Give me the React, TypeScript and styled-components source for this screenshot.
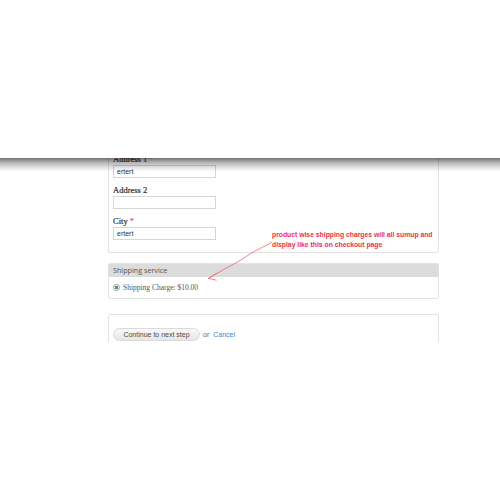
import React from "react";
import styled, { createGlobalStyle } from "styled-components";

const GlobalStyle = createGlobalStyle`
  html, body { margin: 0; padding: 0; background: #fff; }
  body { font-family: "Liberation Sans", Arial, sans-serif; }
`;

const Page = styled.div`
  width: 500px;
  height: 500px;
  display: flex;
  flex-direction: column;
  background: #fff;
`;

const TopSpace = styled.div`
  height: 158px;
  flex: none;
`;

const Viewport = styled.div`
  position: relative;
  height: 184px;
  flex: none;
  overflow: hidden;
`;

const EdgeShadow = styled.div`
  position: absolute;
  left: 0;
  right: 0;
  top: 0;
  height: 14px;
  background: linear-gradient(
    rgba(0, 0, 0, 0.55),
    rgba(0, 0, 0, 0.28) 35%,
    rgba(0, 0, 0, 0.08) 75%,
    rgba(0, 0, 0, 0)
  );
  pointer-events: none;
  z-index: 3;
`;

const Column = styled.div`
  display: flex;
  flex-direction: column;
  padding: 0 61px 0 108px;
`;

const Panel = styled.section<{ $clipTop?: boolean; $gap?: number }>`
  border: 1px solid #e2e2e2;
  border-radius: 2px;
  margin-top: ${(p) => (p.$clipTop ? -20 : p.$gap ?? 0)}px;
  background: #fff;
`;

const FieldsBody = styled.div`
  display: flex;
  flex-direction: column;
  gap: 7px;
  padding: 15px 4px 12px;
`;

const Field = styled.div`
  display: flex;
  flex-direction: column;
  gap: 1px;
`;

const Label = styled.label`
  font-family: "Liberation Serif", Georgia, serif;
  font-weight: normal;
  font-size: 8.5px;
  line-height: 10px;
  height: 10px;
  color: #2e2e2e;
  -webkit-text-stroke: 0.2px #2e2e2e;
`;

const Req = styled.span`
  color: #e0303a;
  -webkit-text-stroke: 0;
  margin-left: 2px;
`;

const TextInput = styled.div`
  box-sizing: border-box;
  width: 103px;
  height: 13px;
  border: 1px solid #d6d6d6;
  padding: 0 3px;
  font-size: 7px;
  line-height: 11px;
  color: #333;
  background: #fff;
`;

const PanelHead = styled.div`
  height: 13px;
  background: #dcdcdc;
  padding: 0 4px;
  font-family: "Open Sans", "Liberation Sans", sans-serif;
  font-size: 7.2px;
  line-height: 13px;
  color: #555;
`;

const OptionRow = styled.div`
  display: flex;
  align-items: center;
  gap: 3px;
  height: 21px;
  padding: 0 4px;
`;

const Radio = styled.span`
  box-sizing: border-box;
  width: 7px;
  height: 7px;
  border-radius: 50%;
  border: 1px solid #96a4ac;
  background: radial-gradient(circle, #47a06a 0 1.6px, #eef4f0 2px);
  flex: none;
`;

const OptionText = styled.span`
  font-family: "Liberation Serif", Georgia, serif;
  font-size: 7.5px;
  color: #555;
`;

const ActionsBody = styled.div`
  display: flex;
  align-items: center;
  gap: 3px;
  padding: 13px 4px 20px;
`;

const StepButton = styled.button`
  box-sizing: border-box;
  height: 13px;
  width: 87px;
  padding: 0;
  border: 1px solid #dadada;
  border-radius: 7px;
  background: linear-gradient(#f8f8f8, #e6e6e6);
  font-family: "Liberation Sans", Arial, sans-serif;
  font-size: 7px;
  line-height: 11px;
  color: #4a4a4a;
`;

const OrText = styled.span`
  font-size: 7px;
  color: #666;
`;

const CancelLink = styled.a`
  font-size: 7px;
  color: #2d8ad4;
  text-decoration: none;
  margin-left: 1px;
`;

const Note = styled.div`
  position: absolute;
  left: 272px;
  top: 72px;
  font-family: "Liberation Sans", Arial, sans-serif;
  font-weight: bold;
  font-size: 6.8px;
  line-height: 9.5px;
  color: #ec2f4b;
  z-index: 2;
  white-space: nowrap;
`;

const Pointer = styled.svg`
  position: absolute;
  left: 0;
  top: 0;
  z-index: 2;
  pointer-events: none;
`;

export default function App() {
  return (
    <>
      <GlobalStyle />
      <Page>
        <TopSpace />
        <Viewport>
          <EdgeShadow />
          <Column>
            <Panel $clipTop>
              <FieldsBody>
                <Field>
                  <Label>
                    Address 1<Req>*</Req>
                  </Label>
                  <TextInput>ertert</TextInput>
                </Field>
                <Field>
                  <Label>Address 2</Label>
                  <TextInput />
                </Field>
                <Field>
                  <Label>
                    City<Req>*</Req>
                  </Label>
                  <TextInput>ertert</TextInput>
                </Field>
              </FieldsBody>
            </Panel>
            <Panel $gap={10}>
              <PanelHead>Shipping service</PanelHead>
              <OptionRow>
                <Radio />
                <OptionText>Shipping Charge: $10.00</OptionText>
              </OptionRow>
            </Panel>
            <Panel $gap={15}>
              <ActionsBody>
                <StepButton>Continue to next step</StepButton>
                <OrText>or</OrText>
                <CancelLink href="#">Cancel</CancelLink>
              </ActionsBody>
            </Panel>
          </Column>
          <Note>
            product wise shipping charges will all sumup and
            <br />
            display like this on checkout page
          </Note>
          <Pointer width="500" height="184" viewBox="0 0 500 184">
            <path
              d="M272 84 C262 90 256 92 250 96 C244 100 238 104 232 107 C224 111 218 115 208.5 120.3"
              fill="none"
              stroke="#f0606f"
              strokeWidth="0.8"
            />
            <path
              d="M216.5 115.3 L208.5 120.3 L216.5 122.3"
              fill="none"
              stroke="#f0606f"
              strokeWidth="0.8"
            />
          </Pointer>
        </Viewport>
      </Page>
    </>
  );
}
